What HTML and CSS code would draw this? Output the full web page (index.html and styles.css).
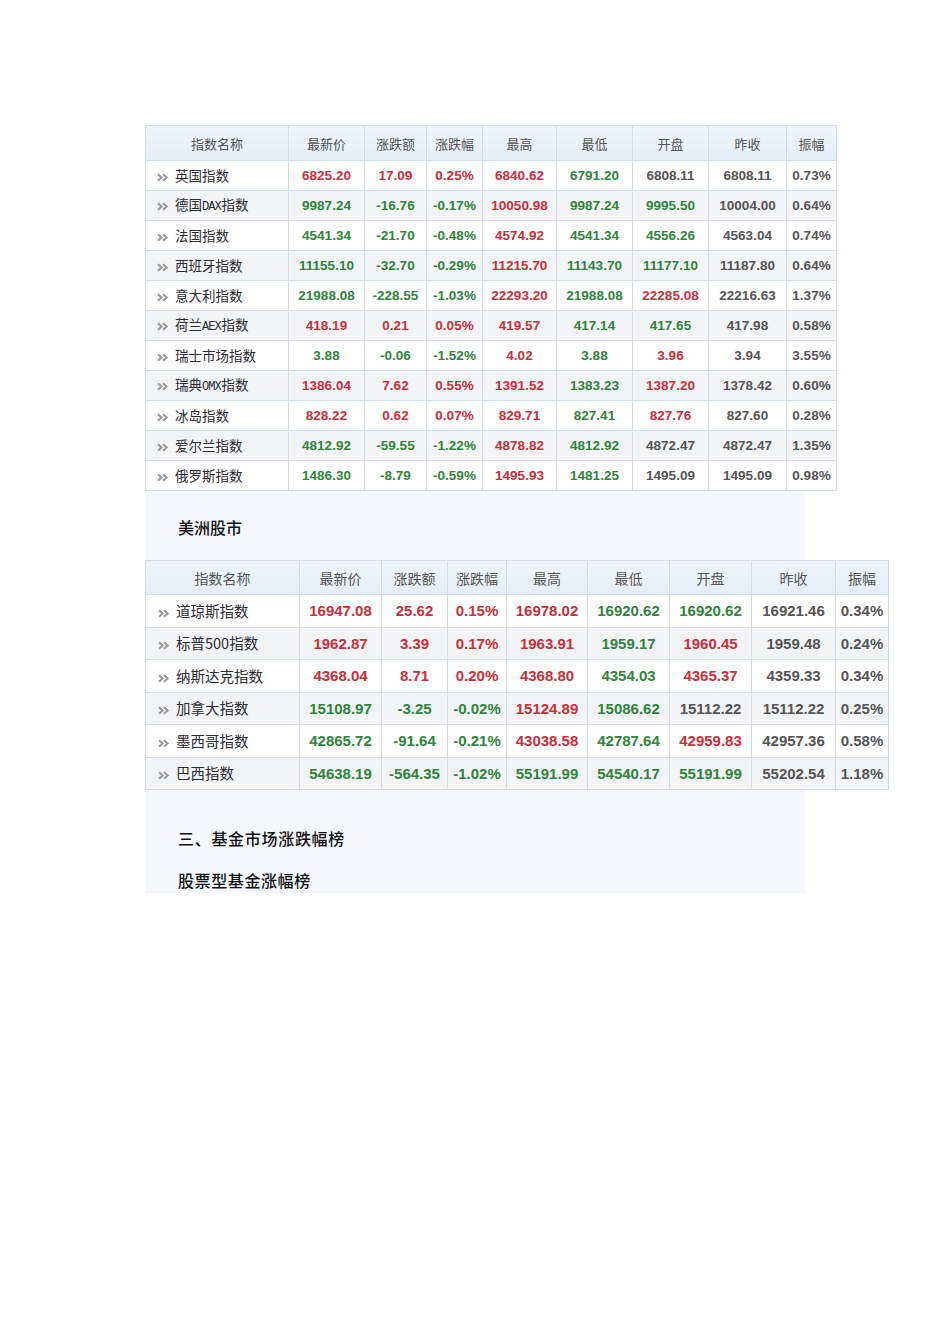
FILE: index.html
```html
<!DOCTYPE html>
<html lang="zh">
<head>
<meta charset="utf-8">
<title>全球股市</title>
<link rel="stylesheet" href="styles.css">
</head>
<body>
<div class="page">
  <table class="idx t1">
    <colgroup>
      <col class="c-name"><col class="c-a"><col class="c-b"><col class="c-c"><col class="c-d"><col class="c-e"><col class="c-f"><col class="c-g"><col class="c-h">
    </colgroup>
    <thead>
      <tr><th>指数名称</th><th>最新价</th><th>涨跌额</th><th>涨跌幅</th><th>最高</th><th>最低</th><th>开盘</th><th>昨收</th><th>振幅</th></tr>
    </thead>
    <tbody>
      <tr><td class="nm"><svg class="chev" viewBox="0 0 12 9"><path d="M1 1.2 L4.6 4.5 L1 7.8 M6 1.2 L9.6 4.5 L6 7.8"/></svg>英国指数</td><td class="up">6825.20</td><td class="up">17.09</td><td class="up">0.25%</td><td class="up">6840.62</td><td class="dn">6791.20</td><td class="eq">6808.11</td><td class="eq">6808.11</td><td class="eq">0.73%</td></tr>
      <tr><td class="nm"><svg class="chev" viewBox="0 0 12 9"><path d="M1 1.2 L4.6 4.5 L1 7.8 M6 1.2 L9.6 4.5 L6 7.8"/></svg>德国<span class="lat">DAX</span>指数</td><td class="dn">9987.24</td><td class="dn">-16.76</td><td class="dn">-0.17%</td><td class="up">10050.98</td><td class="dn">9987.24</td><td class="dn">9995.50</td><td class="eq">10004.00</td><td class="eq">0.64%</td></tr>
      <tr><td class="nm"><svg class="chev" viewBox="0 0 12 9"><path d="M1 1.2 L4.6 4.5 L1 7.8 M6 1.2 L9.6 4.5 L6 7.8"/></svg>法国指数</td><td class="dn">4541.34</td><td class="dn">-21.70</td><td class="dn">-0.48%</td><td class="up">4574.92</td><td class="dn">4541.34</td><td class="dn">4556.26</td><td class="eq">4563.04</td><td class="eq">0.74%</td></tr>
      <tr><td class="nm"><svg class="chev" viewBox="0 0 12 9"><path d="M1 1.2 L4.6 4.5 L1 7.8 M6 1.2 L9.6 4.5 L6 7.8"/></svg>西班牙指数</td><td class="dn">11155.10</td><td class="dn">-32.70</td><td class="dn">-0.29%</td><td class="up">11215.70</td><td class="dn">11143.70</td><td class="dn">11177.10</td><td class="eq">11187.80</td><td class="eq">0.64%</td></tr>
      <tr><td class="nm"><svg class="chev" viewBox="0 0 12 9"><path d="M1 1.2 L4.6 4.5 L1 7.8 M6 1.2 L9.6 4.5 L6 7.8"/></svg>意大利指数</td><td class="dn">21988.08</td><td class="dn">-228.55</td><td class="dn">-1.03%</td><td class="up">22293.20</td><td class="dn">21988.08</td><td class="up">22285.08</td><td class="eq">22216.63</td><td class="eq">1.37%</td></tr>
      <tr><td class="nm"><svg class="chev" viewBox="0 0 12 9"><path d="M1 1.2 L4.6 4.5 L1 7.8 M6 1.2 L9.6 4.5 L6 7.8"/></svg>荷兰<span class="lat">AEX</span>指数</td><td class="up">418.19</td><td class="up">0.21</td><td class="up">0.05%</td><td class="up">419.57</td><td class="dn">417.14</td><td class="dn">417.65</td><td class="eq">417.98</td><td class="eq">0.58%</td></tr>
      <tr><td class="nm"><svg class="chev" viewBox="0 0 12 9"><path d="M1 1.2 L4.6 4.5 L1 7.8 M6 1.2 L9.6 4.5 L6 7.8"/></svg>瑞士市场指数</td><td class="dn">3.88</td><td class="dn">-0.06</td><td class="dn">-1.52%</td><td class="up">4.02</td><td class="dn">3.88</td><td class="up">3.96</td><td class="eq">3.94</td><td class="eq">3.55%</td></tr>
      <tr><td class="nm"><svg class="chev" viewBox="0 0 12 9"><path d="M1 1.2 L4.6 4.5 L1 7.8 M6 1.2 L9.6 4.5 L6 7.8"/></svg>瑞典<span class="lat">OMX</span>指数</td><td class="up">1386.04</td><td class="up">7.62</td><td class="up">0.55%</td><td class="up">1391.52</td><td class="dn">1383.23</td><td class="up">1387.20</td><td class="eq">1378.42</td><td class="eq">0.60%</td></tr>
      <tr><td class="nm"><svg class="chev" viewBox="0 0 12 9"><path d="M1 1.2 L4.6 4.5 L1 7.8 M6 1.2 L9.6 4.5 L6 7.8"/></svg>冰岛指数</td><td class="up">828.22</td><td class="up">0.62</td><td class="up">0.07%</td><td class="up">829.71</td><td class="dn">827.41</td><td class="up">827.76</td><td class="eq">827.60</td><td class="eq">0.28%</td></tr>
      <tr><td class="nm"><svg class="chev" viewBox="0 0 12 9"><path d="M1 1.2 L4.6 4.5 L1 7.8 M6 1.2 L9.6 4.5 L6 7.8"/></svg>爱尔兰指数</td><td class="dn">4812.92</td><td class="dn">-59.55</td><td class="dn">-1.22%</td><td class="up">4878.82</td><td class="dn">4812.92</td><td class="eq">4872.47</td><td class="eq">4872.47</td><td class="eq">1.35%</td></tr>
      <tr><td class="nm"><svg class="chev" viewBox="0 0 12 9"><path d="M1 1.2 L4.6 4.5 L1 7.8 M6 1.2 L9.6 4.5 L6 7.8"/></svg>俄罗斯指数</td><td class="dn">1486.30</td><td class="dn">-8.79</td><td class="dn">-0.59%</td><td class="up">1495.93</td><td class="dn">1481.25</td><td class="eq">1495.09</td><td class="eq">1495.09</td><td class="eq">0.98%</td></tr>
    </tbody>
  </table>

  <div class="panel">
    <h3 class="sec first">美洲股市</h3>
    <table class="idx t2">
      <colgroup>
        <col class="c-name"><col class="c-a"><col class="c-b"><col class="c-c"><col class="c-d"><col class="c-e"><col class="c-f"><col class="c-g"><col class="c-h">
      </colgroup>
      <thead>
        <tr><th>指数名称</th><th>最新价</th><th>涨跌额</th><th>涨跌幅</th><th>最高</th><th>最低</th><th>开盘</th><th>昨收</th><th>振幅</th></tr>
      </thead>
      <tbody>
        <tr><td class="nm"><svg class="chev" viewBox="0 0 12 9"><path d="M1 1.2 L4.6 4.5 L1 7.8 M6 1.2 L9.6 4.5 L6 7.8"/></svg>道琼斯指数</td><td class="up">16947.08</td><td class="up">25.62</td><td class="up">0.15%</td><td class="up">16978.02</td><td class="dn">16920.62</td><td class="dn">16920.62</td><td class="eq">16921.46</td><td class="eq">0.34%</td></tr>
        <tr><td class="nm"><svg class="chev" viewBox="0 0 12 9"><path d="M1 1.2 L4.6 4.5 L1 7.8 M6 1.2 L9.6 4.5 L6 7.8"/></svg>标普500指数</td><td class="up">1962.87</td><td class="up">3.39</td><td class="up">0.17%</td><td class="up">1963.91</td><td class="dn">1959.17</td><td class="up">1960.45</td><td class="eq">1959.48</td><td class="eq">0.24%</td></tr>
        <tr><td class="nm"><svg class="chev" viewBox="0 0 12 9"><path d="M1 1.2 L4.6 4.5 L1 7.8 M6 1.2 L9.6 4.5 L6 7.8"/></svg>纳斯达克指数</td><td class="up">4368.04</td><td class="up">8.71</td><td class="up">0.20%</td><td class="up">4368.80</td><td class="dn">4354.03</td><td class="up">4365.37</td><td class="eq">4359.33</td><td class="eq">0.34%</td></tr>
        <tr><td class="nm"><svg class="chev" viewBox="0 0 12 9"><path d="M1 1.2 L4.6 4.5 L1 7.8 M6 1.2 L9.6 4.5 L6 7.8"/></svg>加拿大指数</td><td class="dn">15108.97</td><td class="dn">-3.25</td><td class="dn">-0.02%</td><td class="up">15124.89</td><td class="dn">15086.62</td><td class="eq">15112.22</td><td class="eq">15112.22</td><td class="eq">0.25%</td></tr>
        <tr><td class="nm"><svg class="chev" viewBox="0 0 12 9"><path d="M1 1.2 L4.6 4.5 L1 7.8 M6 1.2 L9.6 4.5 L6 7.8"/></svg>墨西哥指数</td><td class="dn">42865.72</td><td class="dn">-91.64</td><td class="dn">-0.21%</td><td class="up">43038.58</td><td class="dn">42787.64</td><td class="up">42959.83</td><td class="eq">42957.36</td><td class="eq">0.58%</td></tr>
        <tr><td class="nm"><svg class="chev" viewBox="0 0 12 9"><path d="M1 1.2 L4.6 4.5 L1 7.8 M6 1.2 L9.6 4.5 L6 7.8"/></svg>巴西指数</td><td class="dn">54638.19</td><td class="dn">-564.35</td><td class="dn">-1.02%</td><td class="dn">55191.99</td><td class="dn">54540.17</td><td class="dn">55191.99</td><td class="eq">55202.54</td><td class="eq">1.18%</td></tr>
      </tbody>
    </table>
    <h3 class="sec mid">三、基金市场涨跌幅榜</h3>
    <h3 class="sec last">股票型基金涨幅榜</h3>
  </div>
</div>
</body>
</html>
```

FILE: styles.css
```css
html, body {
  margin: 0;
  padding: 0;
  background: #ffffff;
}

body {
  font-family: "Noto Sans CJK SC", "Liberation Sans", sans-serif;
  color: #222;
}

.page {
  padding: 125px 0 0 145px;
}

.idx {
  border-collapse: collapse;
  table-layout: fixed;
  border: 1px solid #d3dde8;
}

.idx th,
.idx td {
  border: 1px solid #d3dde8;
  padding: 0;
  text-align: center;
  white-space: nowrap;
  overflow: visible;
}

.idx th {
  background: linear-gradient(#eef5fc, #e4eef8);
  font-weight: normal;
  color: #555;
}

.idx tbody tr:nth-child(even) td {
  background: #f3f4f6;
}

.idx tbody tr:nth-child(odd) td {
  background: #ffffff;
}

.idx td {
  font-family: "Liberation Sans", Arial, sans-serif;
  font-weight: bold;
}

.idx td.nm {
  text-align: left;
  font-family: "Noto Sans CJK SC", "Liberation Sans", sans-serif;
  font-weight: normal;
  color: #2b2b33;
  padding-left: 11px;
  line-height: 1;
}

.lat {
  font-family: "Liberation Mono", monospace;
  font-size: 12px;
  letter-spacing: -1px;
  margin-right: 1px;
}

.chev {
  width: 12px;
  height: 9px;
  margin-right: 6px;
  vertical-align: -1px;
}

.chev path {
  fill: none;
  stroke: #9a9a9a;
  stroke-width: 2.1;
}

.up { color: #c8303a; }
.dn { color: #2e853b; }
.eq { color: #555555; }

/* table 1 */
.t1 { width: 691px; }
.t1 thead tr { height: 35px; }
.t1 tbody tr { height: 30px; }
.t1 th { font-size: 13px; }
.t1 td { font-size: 13.5px; }
.t1 td.nm { font-size: 13.5px; }
.t1 .c-name { width: 143px; }
.t1 .c-a { width: 76px; }
.t1 .c-b { width: 62px; }
.t1 .c-c { width: 56px; }
.t1 .c-d { width: 74px; }
.t1 .c-e { width: 76px; }
.t1 .c-f { width: 76px; }
.t1 .c-g { width: 78px; }
.t1 .c-h { width: 50px; }

/* panel */
.panel {
  width: 660px;
  background: #f4f7fc;
  padding: 24px 0 1px 0;
}

.sec {
  margin: 0;
  padding-left: 33px;
  font-size: 16px;
  line-height: 24px;
  font-weight: 500;
  color: #111;
}

.sec.first { margin-bottom: 21px; }
.sec.mid { margin-top: 36px; letter-spacing: 0.7px; }
.sec.last { margin-top: 18px; letter-spacing: 0.6px; }

/* table 2 */
.t2 { width: 743px; }
.t2 thead tr { height: 34px; }
.t2 tbody tr { height: 32.5px; }
.t2 th { font-size: 14px; }
.t2 td { font-size: 15px; }
.t2 td.nm { font-size: 14.5px; padding-left: 12px; }
.t2 .c-name { width: 154px; }
.t2 .c-a { width: 82px; }
.t2 .c-b { width: 66px; }
.t2 .c-c { width: 59px; }
.t2 .c-d { width: 81px; }
.t2 .c-e { width: 82px; }
.t2 .c-f { width: 82px; }
.t2 .c-g { width: 84px; }
.t2 .c-h { width: 53px; }
```
